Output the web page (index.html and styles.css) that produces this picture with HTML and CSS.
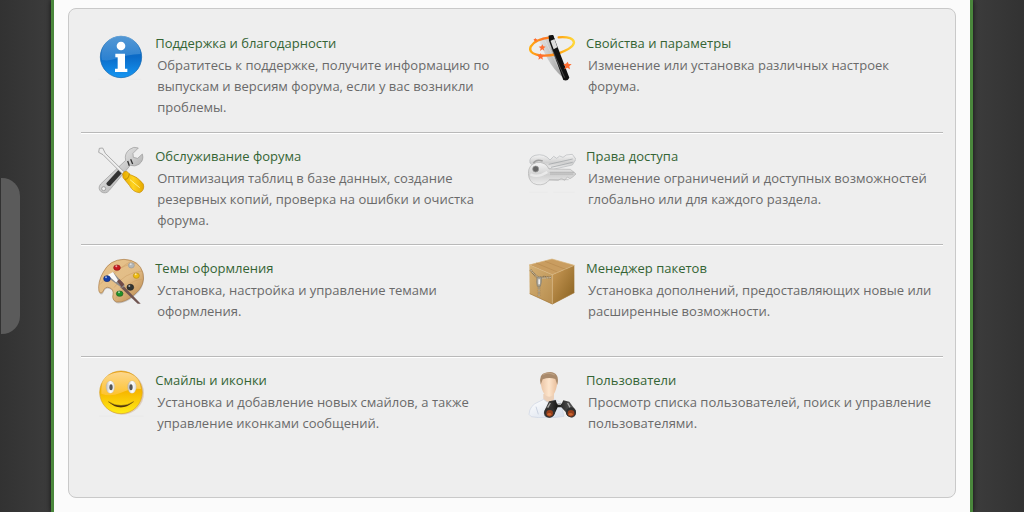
FILE: index.html
```html
<!DOCTYPE html>
<html lang="ru">
<head>
<meta charset="utf-8">
<title>Центр администрирования</title>
<link rel="stylesheet" href="styles.css">
</head>
<body>
<button class="side-tab" type="button" aria-label="Открыть панель"></button>
<main class="page">
<section class="panel">
<ul class="tasks">
<li class="task">
<svg class="icon" viewBox="21 15 144 144" aria-hidden="true">
<defs><linearGradient id="blue" x2="0" y2="1"><stop offset="0" stop-color="#0965b8"/><stop offset=".5" stop-color="#0b6bc8"/><stop offset="1" stop-color="#1596f2"/></linearGradient>
<linearGradient id="gloss" x2="0" y2="1"><stop offset="0" stop-color="#7db4e4"/><stop offset="1" stop-color="#3b8bd4"/></linearGradient></defs>
<path d="M24 154h46M114 154h40" stroke="#e8e8e8" stroke-width="2"/>
<circle cx="93" cy="87" r="62" fill="url(#blue)" stroke="#0b62ae" stroke-width="2"/>
<path d="M34 87A59 59 0 0 1 152 78Q108 80 82 91Q57 100 36 96z" fill="url(#gloss)" opacity=".65"/>
<circle cx="93" cy="54" r="13" fill="#fff"/><path d="M76 77h29v45h7v10H75v-10h8V88h-7z" fill="#fff"/>
</svg>
<div class="text"><h2 class="title"><a href="#">Поддержка и благодарности</a></h2><p class="desc">Обратитесь к поддержке, получите информацию по выпускам и версиям форума, если у вас возникли проблемы.</p></div>
</li>
<li class="task">
<svg class="icon" viewBox="24 21 144 144" aria-hidden="true">
<defs><linearGradient id="ring" x1="0" x2="1"><stop offset="0" stop-color="#ffae12"/><stop offset=".3" stop-color="#ff7625"/><stop offset=".65" stop-color="#ffa010"/><stop offset="1" stop-color="#ffd83a"/></linearGradient>
<linearGradient id="trail" x1="0" x2="1"><stop offset="0" stop-color="#d8d8d8" stop-opacity=".6"/><stop offset="1" stop-color="#777"/></linearGradient></defs>
<path d="M55 38L90 30L137 160Q90 130 55 38z" fill="url(#trail)" opacity=".8"/>
<path d="M73 40L128 150" stroke="#fff" stroke-width="2" opacity=".4"/>
<path d="M91 34Q45 39 32 62C22 85 62 96 111 84Q160 67 162 50Q161 31 116 34" fill="none" stroke="url(#ring)" stroke-width="7" stroke-linecap="round"/>
<path d="M86 29L99 27L148 155Q143 167 130 162L87 44z" fill="#111"/>
<path d="M95 68L134 155" stroke="#666" stroke-width="2"/><path d="M91 43L103 38L112 64L101 70z" fill="#ddd"/><path d="M86 29l13-2 5 12-14 6z" fill="#111"/>
<g fill="#ff6d31"><path d="M67 55l3 6 7 1-6 5 2 7-6-4-7 5 2-8-6-5 8-1z"/><path d="M62 82l3 6 8 0-6 6 2 7-7-4-7 4 2-7-6-6 7-1z"/><path d="M143 107l3 7 9 0-7 7 2 9-8-5-9 5 3-9-6-7 8-1z"/><path d="M46 36l2 3 4 1-3 3 0 4-4-2-3 1 1-4-3-3 4 0z"/></g>
</svg>
<div class="text"><h2 class="title"><a href="#">Свойства и параметры</a></h2><p class="desc">Изменение или установка различных настроек форума.</p></div>
</li>
<li class="task">
<svg class="icon" viewBox="21 18 144 144" aria-hidden="true">
<defs><linearGradient id="steel" x2="1" y2="1"><stop offset="0" stop-color="#fff"/><stop offset=".5" stop-color="#ccc"/><stop offset="1" stop-color="#909090"/></linearGradient>
<linearGradient id="amber" x2="1"><stop offset="0" stop-color="#e5aa00"/><stop offset=".5" stop-color="#ffd31e"/><stop offset="1" stop-color="#e5a800"/></linearGradient></defs>
<path d="M145 24L129 40L130 52L143 55L157 42Q163 61 147 73Q135 81 121 76L58 151Q48 164 33 155Q22 145 32 132L107 61Q102 41 119 28Q131 18 145 24z" fill="url(#steel)" stroke="#999" stroke-width="2"/>
<path d="M87 88L98 97L61 137Q50 141 49 130z" fill="#333"/>
<path d="M113 63l5 14M122 58l6 14" stroke="#333" stroke-width="4"/>
<circle cx="41" cy="146" r="6" fill="#eee" stroke="#888" stroke-width="2"/>
<path d="M28 25L38 24L46 40L110 103L104 109L39 44L26 37z" fill="#eee" stroke="#888" stroke-width="2"/>
<path d="M98 101Q102 93 110 94L121 104Q143 109 160 132Q165 151 149 158Q129 157 118 136L99 113z" fill="url(#amber)" stroke="#c58a00" stroke-width="2"/>
<path d="M120 119L149 143" stroke="#fff08b" stroke-width="3"/><path d="M118 101Q116 118 105 118" fill="none" stroke="#9c7000" stroke-width="2"/>
</svg>
<div class="text"><h2 class="title"><a href="#">Обслуживание форума</a></h2><p class="desc">Оптимизация таблиц в базе данных, создание резервных копий, проверка на ошибки и очистка форума.</p></div>
</li>
<li class="task">
<svg class="icon" viewBox="24 18 144 144" aria-hidden="true">
<defs><linearGradient id="silver" x2="0" y2="1"><stop offset="0" stop-color="#f5f5f5"/><stop offset=".55" stop-color="#d0d0d0"/><stop offset="1" stop-color="#eee"/></linearGradient></defs>
<path d="M28 157h55M100 157h64" stroke="#e8e8e8" stroke-width="2"/>
<path d="M30 69Q26 52 45 46Q73 39 90 60L101 49L110 55L119 48L129 52L139 45L157 43L168 58L157 75L99 88L77 82L40 77z" fill="url(#silver)" stroke="#b4b7ba" stroke-width="2"/>
<path d="M40 70Q48 56 68 63" fill="none" stroke="#a0a0a0" stroke-width="5"/><path d="M86 73L158 57M93 82L158 67" stroke="#9a9ea2" stroke-width="2"/>
<path d="M87 87L151 88L168 102L158 111L150 116L142 111L134 121L124 115L115 121L88 120Q75 137 51 134Q27 130 25 101Q25 74 49 68Q77 64 87 87z" fill="url(#silver)" stroke="#b0b0b0" stroke-width="2"/>
<path d="M89 97H163M90 102H160" stroke="#a5a5a5" stroke-width="2"/><path d="M87 119H146" stroke="#b5b5b5" stroke-width="2"/>
<circle cx="47" cy="87" r="9" fill="#666" stroke="#999" stroke-width="2"/><path d="M31 103Q55 114 82 96" fill="none" stroke="#fff" stroke-width="7" opacity=".5"/>
</svg>
<div class="text"><h2 class="title"><a href="#">Права доступа</a></h2><p class="desc">Изменение ограничений и доступных возможностей глобально или для каждого раздела.</p></div>
</li>
<li class="task">
<svg class="icon" viewBox="21 18 144 144" aria-hidden="true">
<defs><linearGradient id="wood" x2="1" y2="1"><stop offset="0" stop-color="#e8c38b"/><stop offset=".55" stop-color="#e2bd87"/><stop offset="1" stop-color="#b88549"/></linearGradient></defs>
<path d="M27 119Q22 91 40 60Q59 23 102 22Q148 24 159 63Q167 100 135 126Q106 153 80 150Q65 144 69 128Q72 112 58 107Q45 102 39 119Q33 128 27 119z" fill="#777" opacity=".35" transform="translate(1 4)"/>
<path d="M27 119Q22 91 40 60Q59 23 102 22Q148 24 159 63Q167 100 135 126Q106 153 80 150Q65 144 69 128Q72 112 58 107Q45 102 39 119Q33 128 27 119z" fill="url(#wood)" stroke="#a87945" stroke-width="2"/>
<path d="M31 96Q82 38 142 33M72 107Q103 61 158 57M77 139Q115 84 158 81M53 86Q89 46 124 27" fill="none" stroke="#c99a61" stroke-width="2" opacity=".7"/>
<path d="M98 99L152 155L143 155L91 106z" fill="#705551"/>
<path d="M52 70Q66 73 69 60L104 99Q103 108 95 107L63 84z" fill="#8d8b8b"/><path d="M53 69L69 60L85 86L78 91z" fill="#fafafa"/><path d="M81 87l8-5 14 15-8 9z" fill="#704b48"/>
<g stroke-width="2"><ellipse cx="81" cy="47" rx="10" ry="8" fill="#c71920" stroke="#941317"/><ellipse cx="124" cy="40" rx="9" ry="8" fill="#b4b7b7" stroke="#999"/><ellipse cx="139" cy="71" rx="9" ry="8" fill="#efbd12" stroke="#b98d12"/><ellipse cx="51" cy="80" rx="10" ry="9" fill="#123eaa" stroke="#193375"/><ellipse cx="121" cy="106" rx="10" ry="9" fill="#303331" stroke="#222"/><ellipse cx="89" cy="125" rx="10" ry="8" fill="#219228" stroke="#226026"/></g>
<g fill="#fff" opacity=".6"><circle cx="79" cy="43" r="3"/><circle cx="122" cy="37" r="3"/><circle cx="137" cy="67" r="3"/><circle cx="48" cy="76" r="3"/><circle cx="118" cy="102" r="3"/><circle cx="87" cy="121" r="3"/></g>
</svg>
<div class="text"><h2 class="title"><a href="#">Темы оформления</a></h2><p class="desc">Установка, настройка и управление темами оформления.</p></div>
</li>
<li class="task">
<svg class="icon" viewBox="24 18 144 144" aria-hidden="true">
<defs><linearGradient id="boxright" x2="1" y2="1"><stop offset="0" stop-color="#cc9c59"/><stop offset="1" stop-color="#87601f"/></linearGradient><linearGradient id="boxleft" x2="1" y2="1"><stop offset="0" stop-color="#d5b176"/><stop offset="1" stop-color="#b78d4e"/></linearGradient></defs>
<path d="M28 38L96 21L163 40L97 68z" fill="#c99d60"/><path d="M28 38L97 68V157L29 125z" fill="url(#boxleft)"/><path d="M97 68L163 40V122L97 157z" fill="url(#boxright)"/>
<path d="M28 39L96 21L163 40M28 39L97 68L163 40M97 68V156" fill="none" stroke="#d8b57d" stroke-width="2"/><path d="M29 125L97 156L163 122" fill="none" stroke="#a47a3c" stroke-width="2"/>
<path d="M48 33L112 60M75 28L137 52" stroke="#b78a4e" stroke-width="2"/>
<path d="M31 54L46 70L56 79L72 75L93 77M57 79V133" fill="none" stroke="#7d6c53" stroke-width="7" stroke-dasharray="3 2"/><path d="M31 54L56 79L93 77M57 79V133" fill="none" stroke="#d8d1bd" stroke-width="3" stroke-dasharray="3 2"/>
<path d="M51 75h13v15l-3 13h-9l-2-13z" fill="#aaa69b" stroke="#807b70" stroke-width="2"/><path d="M55 82h5v15h-5z" fill="#eee"/>
</svg>
<div class="text"><h2 class="title"><a href="#">Менеджер пакетов</a></h2><p class="desc">Установка дополнений, предоставляющих новые или расширенные возможности.</p></div>
</li>
<li class="task">
<svg class="icon" viewBox="21 18 144 144" aria-hidden="true">
<defs><linearGradient id="sun" x2="0" y2="1"><stop offset="0" stop-color="#ef9c00"/><stop offset=".5" stop-color="#f7b800"/><stop offset="1" stop-color="#ffec16"/></linearGradient><linearGradient id="shine" x2="0" y2="1"><stop offset="0" stop-color="#ffe5b0"/><stop offset="1" stop-color="#ffc43a"/></linearGradient><linearGradient id="eye"><stop offset="0" stop-color="#bbb"/><stop offset=".5" stop-color="#fff"/><stop offset="1" stop-color="#ddd"/></linearGradient></defs>
<circle cx="97" cy="87" r="65" fill="#c69e77" opacity=".4"/><path d="M27 156h50M115 156h45" stroke="#e8e8e8" stroke-width="2"/>
<circle cx="93" cy="85" r="64" fill="url(#sun)" stroke="#d6a12d" stroke-width="2"/>
<path d="M34 76Q34 27 93 24Q148 26 153 75Q125 71 91 87Q61 99 34 89z" fill="url(#shine)" opacity=".8"/>
<ellipse cx="61" cy="69" rx="13" ry="19" fill="url(#eye)" stroke="#c9b078" stroke-width="1"/><ellipse cx="126" cy="69" rx="13" ry="19" fill="url(#eye)" stroke="#c9b078" stroke-width="1"/><ellipse cx="63" cy="70" rx="5" ry="9" fill="#555"/><ellipse cx="123" cy="70" rx="5" ry="9" fill="#555"/>
<path d="M55 113Q92 146 131 113Q93 136 55 113z" fill="#51370e" stroke="#51370e" stroke-width="1"/>
</svg>
<div class="text"><h2 class="title"><a href="#">Смайлы и иконки</a></h2><p class="desc">Установка и добавление новых смайлов, а также управление иконками сообщений.</p></div>
</li>
<li class="task">
<svg class="icon" viewBox="24 18 144 144" aria-hidden="true">
<defs><linearGradient id="skin" x1="0" x2="1"><stop offset="0" stop-color="#eac4a4"/><stop offset=".5" stop-color="#fde5cc"/><stop offset="1" stop-color="#e8bd9a"/></linearGradient><linearGradient id="shirt" x2="1" y2="1"><stop offset="0" stop-color="#fff"/><stop offset="1" stop-color="#d5ddea"/></linearGradient><linearGradient id="metal" x1="0" x2="1"><stop offset="0" stop-color="#555"/><stop offset=".4" stop-color="#1a1a1a"/><stop offset="1" stop-color="#686868"/></linearGradient></defs>
<path d="M70 90h32v35q-15 12-32 0z" fill="#ecd0b8"/><path d="M27 151Q29 123 57 113L71 106Q88 124 103 106L122 115L132 157Q77 166 34 158z" fill="url(#shirt)" stroke="#ccd3e2" stroke-width="2"/><path d="M48 128L55 151" stroke="#cbd3e1" stroke-width="3"/>
<path d="M62 51Q61 28 87 25Q112 28 112 52Q110 80 100 93Q87 104 75 93Q63 79 62 51z" fill="url(#skin)"/><path d="M62 62Q55 29 77 26Q101 19 111 35Q116 45 112 63L106 45Q87 39 68 46z" fill="#a98a6c"/><path d="M69 32Q85 22 104 33" fill="none" stroke="#bca082" stroke-width="4"/>
<path d="M74 139L87 112L107 108L111 119H125L130 109L148 113L167 139Q172 156 156 161Q139 159 137 144L124 130H113L105 147Q98 163 80 160Q67 153 74 139z" fill="url(#metal)"/>
<circle cx="89" cy="145" r="16" fill="#303030"/><circle cx="153" cy="145" r="15" fill="#303030"/><circle cx="89" cy="148" r="10" fill="#953e1b"/><circle cx="153" cy="148" r="10" fill="#953e1b"/><ellipse cx="88" cy="151" rx="6" ry="4" fill="#ca6530"/><ellipse cx="152" cy="151" rx="6" ry="4" fill="#ca6530"/>
<path d="M91 117L83 131M143 117L150 130M113 121h10" stroke="#aaa" stroke-width="4"/>
</svg>
<div class="text"><h2 class="title"><a href="#">Пользователи</a></h2><p class="desc">Просмотр списка пользователей, поиск и управление пользователями.</p></div>
</li>
</ul>
</section>
</main>
</body>
</html>
```
FILE: styles.css
```css
* {
  box-sizing: border-box;
}

body {
  margin: 0;
  min-height: 100vh;
  background: linear-gradient(90deg, #323232, #3c3c3c 5%, #3c3c3c 95%, #323232);
  color: #6a6a6a;
  font: 13px/21px "Open Sans", "Noto Sans", sans-serif;
}

.page {
  width: 90%;
  min-height: 100vh;
  margin: 0 auto;
  padding: 8px 14px 14px;
  background: #fbfbfb;
  border: solid #4a873c;
  border-width: 0 3px;
  box-shadow: 0 0 5px #111;
}

.panel {
  padding: 12px 12px 28px;
  background: #eee;
  border: 1px solid #c9c9c9;
  border-radius: 8px;
}

.tasks {
  display: grid;
  grid-template-columns: 1fr 1fr;
  margin: 0;
  padding: 0;
  list-style: none;
}

.task {
  display: flex;
  gap: 10px;
  min-height: 112px;
  padding: 13px 8px 12px 16px;
  border-bottom: 1px solid #b9b9b9;
  box-shadow: 0 1px #fff;
}

.task:nth-child(-n + 2) {
  padding-top: 12px;
}

.task:nth-last-child(-n + 2) {
  border-bottom: 0;
  box-shadow: none;
}

.icon {
  flex: none;
  width: 48px;
  height: 48px;
}

.text {
  flex: 1;
  min-width: 0;
}

.title {
  margin: 0 0 1px;
  font-size: 13px;
  font-weight: 400;
}

.title a {
  color: #346434;
  text-decoration: none;
}

.desc {
  margin: 0;
  padding-left: 2px;
}

.side-tab {
  position: fixed;
  top: 178px;
  left: 1px;
  width: 19px;
  height: 156px;
  padding: 0;
  background: #5b5b5b;
  border: 0;
  border-radius: 0 18px 18px 0;
}
```
